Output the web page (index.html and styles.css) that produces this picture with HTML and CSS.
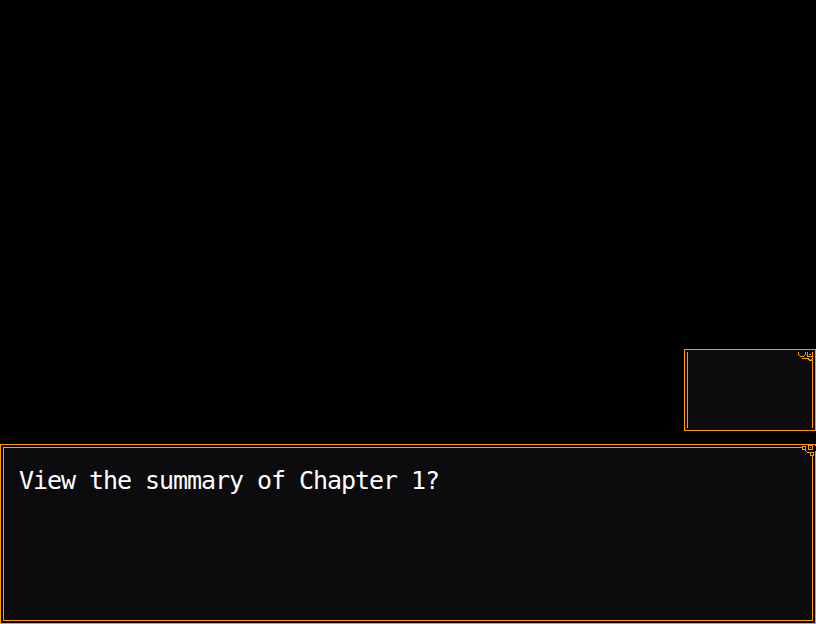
FILE: index.html
```html
<!DOCTYPE html>
<html lang="en">
<head>
<meta charset="utf-8">
<title>Chapter summary</title>
<link rel="stylesheet" href="styles.css">
</head>
<body>
<div class="screen">
  <div class="stage"></div>
  <div class="win-sm">
    <div class="win-sm-in"></div>
    <svg class="orn orn-sm" width="16" height="11" viewBox="0 0 16 11" shape-rendering="crispEdges">
      <g fill="none" stroke="#ff9a00" stroke-width="1">
        <path d="M0.5,0 V2.5 L2.5,4.5 H5.5 L7.5,2.5 V0"/>
        <path d="M9.5,0 V4.5 H14.5 V0"/>
        <path d="M4,6.5 H10.5 L11.5,8.5 H13.5 L14.5,6.5"/>
      </g>
      <rect x="11" y="2" width="2" height="1" fill="#ff9a00"/>
    </svg>
  </div>
  <div class="win-main">
    <p class="msg">View the summary of Chapter 1?</p>
    <svg class="orn orn-main" width="16" height="16" viewBox="0 0 16 16" shape-rendering="crispEdges">
      <rect x="0" y="2" width="16" height="5" fill="#000"/>
      <rect x="11" y="2" width="3" height="14" fill="#000"/>
      <g fill="none" stroke="#ff9a00" stroke-width="1">
        <path d="M0,3.5 H2.5"/>
        <rect x="2.5" y="2.5" width="3" height="3"/>
        <path d="M4.5,5.5 L7.5,8.5 H10"/>
        <rect x="8.5" y="1.5" width="4" height="4"/>
        <rect x="10.5" y="8.5" width="3" height="3"/>
        <path d="M12.5,11.5 V16"/>
      </g>
      <rect x="10" y="3" width="1" height="1" fill="#ff9a00"/>
    </svg>
  </div>
</div>
</body>
</html>
```

FILE: styles.css
```css
html, body {
  margin: 0;
  padding: 0;
  background: #000;
}

.screen {
  width: 816px;
  height: 624px;
  display: flex;
  flex-direction: column;
  align-items: flex-end;
  overflow: hidden;
}

.stage {
  height: 349px;
  flex: none;
  width: 100%;
}

.win-sm {
  position: relative;
  width: 132px;
  height: 82px;
  box-sizing: border-box;
  border: 1px solid #ff9a00;
  background: #0c0c0f;
  padding: 2px 2px;
  margin-bottom: 13px;
  flex: none;
}

.win-sm-in {
  height: 100%;
  box-sizing: border-box;
  border-left: 1px solid #ff9a00;
  border-right: 1px solid #ff9a00;
}

.win-main {
  position: relative;
  width: 816px;
  height: 180px;
  box-sizing: border-box;
  border: 1px solid #ff9a00;
  box-shadow: inset 0 0 0 2px #000, inset 0 0 0 3px #ff9a00;
  background: #0c0c0f;
  padding: 19px 18px;
  flex: none;
}

.msg {
  margin: 0;
  font-family: "DejaVu Sans Mono", monospace;
  font-size: 25px;
  letter-spacing: -1.05px;
  line-height: 34px;
  color: #ffffff;
  white-space: pre;
}

.orn {
  position: absolute;
  display: block;
}

.orn-sm {
  top: 2px;
  right: 1px;
}

.orn-main {
  top: -1px;
  right: -1px;
}
```
